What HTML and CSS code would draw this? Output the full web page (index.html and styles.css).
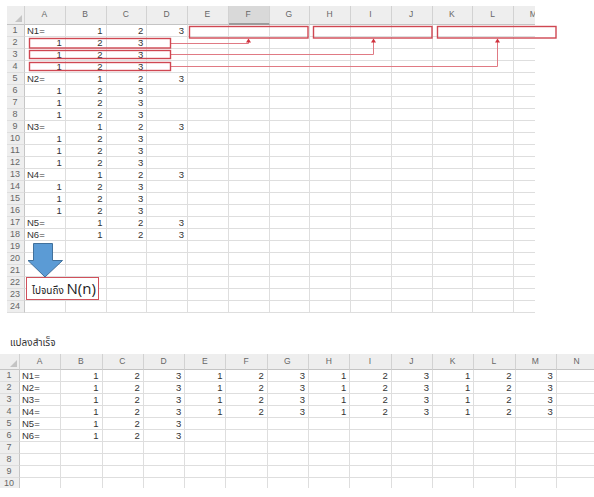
FILE: index.html
```html
<!DOCTYPE html>
<html lang="th">
<head>
<meta charset="utf-8">
<title>Sheet</title>
<link rel="stylesheet" href="styles.css">
</head>
<body>
<div class="s1">
  <div class="r hd"><span class="corner"></span><span>A</span><span>B</span><span>C</span><span>D</span><span>E</span><span class="sel">F</span><span>G</span><span>H</span><span>I</span><span>J</span><span>K</span><span>L</span><span>M</span></div>
  <div class="r"><span class="rh">1</span><span>N1=</span><span class="n">1</span><span class="n">2</span><span class="n">3</span><i></i><i></i><i></i><i></i><i></i><i></i><i></i><i></i><i></i></div>
  <div class="r"><span class="rh">2</span><span class="n">1</span><span class="n">2</span><span class="n">3</span><i></i><i></i><i></i><i></i><i></i><i></i><i></i><i></i><i></i><i></i></div>
  <div class="r"><span class="rh">3</span><span class="n">1</span><span class="n">2</span><span class="n">3</span><i></i><i></i><i></i><i></i><i></i><i></i><i></i><i></i><i></i><i></i></div>
  <div class="r"><span class="rh">4</span><span class="n">1</span><span class="n">2</span><span class="n">3</span><i></i><i></i><i></i><i></i><i></i><i></i><i></i><i></i><i></i><i></i></div>
  <div class="r"><span class="rh">5</span><span>N2=</span><span class="n">1</span><span class="n">2</span><span class="n">3</span><i></i><i></i><i></i><i></i><i></i><i></i><i></i><i></i><i></i></div>
  <div class="r"><span class="rh">6</span><span class="n">1</span><span class="n">2</span><span class="n">3</span><i></i><i></i><i></i><i></i><i></i><i></i><i></i><i></i><i></i><i></i></div>
  <div class="r"><span class="rh">7</span><span class="n">1</span><span class="n">2</span><span class="n">3</span><i></i><i></i><i></i><i></i><i></i><i></i><i></i><i></i><i></i><i></i></div>
  <div class="r"><span class="rh">8</span><span class="n">1</span><span class="n">2</span><span class="n">3</span><i></i><i></i><i></i><i></i><i></i><i></i><i></i><i></i><i></i><i></i></div>
  <div class="r"><span class="rh">9</span><span>N3=</span><span class="n">1</span><span class="n">2</span><span class="n">3</span><i></i><i></i><i></i><i></i><i></i><i></i><i></i><i></i><i></i></div>
  <div class="r"><span class="rh">10</span><span class="n">1</span><span class="n">2</span><span class="n">3</span><i></i><i></i><i></i><i></i><i></i><i></i><i></i><i></i><i></i><i></i></div>
  <div class="r"><span class="rh">11</span><span class="n">1</span><span class="n">2</span><span class="n">3</span><i></i><i></i><i></i><i></i><i></i><i></i><i></i><i></i><i></i><i></i></div>
  <div class="r"><span class="rh">12</span><span class="n">1</span><span class="n">2</span><span class="n">3</span><i></i><i></i><i></i><i></i><i></i><i></i><i></i><i></i><i></i><i></i></div>
  <div class="r"><span class="rh">13</span><span>N4=</span><span class="n">1</span><span class="n">2</span><span class="n">3</span><i></i><i></i><i></i><i></i><i></i><i></i><i></i><i></i><i></i></div>
  <div class="r"><span class="rh">14</span><span class="n">1</span><span class="n">2</span><span class="n">3</span><i></i><i></i><i></i><i></i><i></i><i></i><i></i><i></i><i></i><i></i></div>
  <div class="r"><span class="rh">15</span><span class="n">1</span><span class="n">2</span><span class="n">3</span><i></i><i></i><i></i><i></i><i></i><i></i><i></i><i></i><i></i><i></i></div>
  <div class="r"><span class="rh">16</span><span class="n">1</span><span class="n">2</span><span class="n">3</span><i></i><i></i><i></i><i></i><i></i><i></i><i></i><i></i><i></i><i></i></div>
  <div class="r"><span class="rh">17</span><span>N5=</span><span class="n">1</span><span class="n">2</span><span class="n">3</span><i></i><i></i><i></i><i></i><i></i><i></i><i></i><i></i><i></i></div>
  <div class="r"><span class="rh">18</span><span>N6=</span><span class="n">1</span><span class="n">2</span><span class="n">3</span><i></i><i></i><i></i><i></i><i></i><i></i><i></i><i></i><i></i></div>
  <div class="r"><span class="rh">19</span><i></i><i></i><i></i><i></i><i></i><i></i><i></i><i></i><i></i><i></i><i></i><i></i><i></i></div>
  <div class="r"><span class="rh">20</span><i></i><i></i><i></i><i></i><i></i><i></i><i></i><i></i><i></i><i></i><i></i><i></i><i></i></div>
  <div class="r"><span class="rh">21</span><i></i><i></i><i></i><i></i><i></i><i></i><i></i><i></i><i></i><i></i><i></i><i></i><i></i></div>
  <div class="r"><span class="rh">22</span><i></i><i></i><i></i><i></i><i></i><i></i><i></i><i></i><i></i><i></i><i></i><i></i><i></i></div>
  <div class="r"><span class="rh">23</span><i></i><i></i><i></i><i></i><i></i><i></i><i></i><i></i><i></i><i></i><i></i><i></i><i></i></div>
  <div class="r"><span class="rh">24</span><i></i><i></i><i></i><i></i><i></i><i></i><i></i><i></i><i></i><i></i><i></i><i></i><i></i></div>

  <svg class="ov" width="594" height="320" viewBox="0 0 594 320" aria-hidden="true">
    <g fill="none" stroke="#e07a84" stroke-width="1">
      <polyline points="170,43.5 248.5,43.5 248.5,41"/>
      <polyline points="170,54.5 373.5,54.5 373.5,41"/>
      <polyline points="170,66.5 497.5,66.5 497.5,41"/>
    </g>
    <g fill="#d0303c">
      <polygon points="248.5,38.5 246,42.5 251,42.5"/>
      <polygon points="373.5,38.5 371,42.5 376,42.5"/>
      <polygon points="497.5,38.5 495,42.5 500,42.5"/>
    </g>
    <g fill="none" stroke="#cf4752" stroke-width="1.4">
      <rect x="29.5" y="38.5" width="141" height="9.5"/>
      <rect x="29.5" y="50.5" width="141" height="8"/>
      <rect x="29.5" y="62.5" width="141" height="8"/>
      <rect x="189.5" y="26.5" width="118.5" height="11.5"/>
      <rect x="313.5" y="26.5" width="118.5" height="11.5"/>
      <rect x="437.5" y="26.5" width="118.5" height="11.5"/>
    </g>
    <polygon points="33.5,243.5 52.5,243.5 52.5,260.5 62.5,260.5 45,277 28,260.5 33.5,260.5" fill="#5b9bd5" stroke="#41719c" stroke-width="1"/>
  </svg>
  <div class="tb"><span class="th">ไปจนถึง</span> <span class="nn">N(n)</span></div>
</div>

<div class="cap">แปลงสำเร็จ</div>

<div class="s2">
  <div class="r hd"><span class="corner"></span><span>A</span><span>B</span><span>C</span><span>D</span><span>E</span><span>F</span><span>G</span><span>H</span><span>I</span><span>J</span><span>K</span><span>L</span><span>M</span><span>N</span></div>
  <div class="r"><span class="rh">1</span><span>N1=</span><span class="n">1</span><span class="n">2</span><span class="n">3</span><span class="n">1</span><span class="n">2</span><span class="n">3</span><span class="n">1</span><span class="n">2</span><span class="n">3</span><span class="n">1</span><span class="n">2</span><span class="n">3</span><i></i></div>
  <div class="r"><span class="rh">2</span><span>N2=</span><span class="n">1</span><span class="n">2</span><span class="n">3</span><span class="n">1</span><span class="n">2</span><span class="n">3</span><span class="n">1</span><span class="n">2</span><span class="n">3</span><span class="n">1</span><span class="n">2</span><span class="n">3</span><i></i></div>
  <div class="r"><span class="rh">3</span><span>N3=</span><span class="n">1</span><span class="n">2</span><span class="n">3</span><span class="n">1</span><span class="n">2</span><span class="n">3</span><span class="n">1</span><span class="n">2</span><span class="n">3</span><span class="n">1</span><span class="n">2</span><span class="n">3</span><i></i></div>
  <div class="r"><span class="rh">4</span><span>N4=</span><span class="n">1</span><span class="n">2</span><span class="n">3</span><span class="n">1</span><span class="n">2</span><span class="n">3</span><span class="n">1</span><span class="n">2</span><span class="n">3</span><span class="n">1</span><span class="n">2</span><span class="n">3</span><i></i></div>
  <div class="r"><span class="rh">5</span><span>N5=</span><span class="n">1</span><span class="n">2</span><span class="n">3</span><i></i><i></i><i></i><i></i><i></i><i></i><i></i><i></i><i></i><i></i></div>
  <div class="r"><span class="rh">6</span><span>N6=</span><span class="n">1</span><span class="n">2</span><span class="n">3</span><i></i><i></i><i></i><i></i><i></i><i></i><i></i><i></i><i></i><i></i></div>
  <div class="r"><span class="rh">7</span><i></i><i></i><i></i><i></i><i></i><i></i><i></i><i></i><i></i><i></i><i></i><i></i><i></i><i></i></div>
  <div class="r"><span class="rh">8</span><i></i><i></i><i></i><i></i><i></i><i></i><i></i><i></i><i></i><i></i><i></i><i></i><i></i><i></i></div>
  <div class="r"><span class="rh">9</span><i></i><i></i><i></i><i></i><i></i><i></i><i></i><i></i><i></i><i></i><i></i><i></i><i></i><i></i></div>
  <div class="r"><span class="rh">10</span><i></i><i></i><i></i><i></i><i></i><i></i><i></i><i></i><i></i><i></i><i></i><i></i><i></i><i></i></div>
</div>
</body>
</html>
```
FILE: styles.css
```css
* { box-sizing: border-box; }
html, body { margin: 0; padding: 0; }
body {
  background: #fff;
  font-family: "Liberation Sans", Arial, "Noto Sans Thai", sans-serif;
  font-size: 9.5px;
  color: #333;
  width: 594px;
  height: 497px;
  overflow: hidden;
}
.s1 {
  position: relative;
  margin: 6px 0 0 7px;
  width: 528px;
}
.r {
  display: grid;
  height: 12px;
}
.s1 .r {
  grid-template-columns: 18px repeat(13, 40.75px);
  width: 528px;
  overflow: hidden;
}
.s2 .r { grid-template-columns: 20px repeat(14, 41.3px); }
.r > * {
  border-right: 1px solid #dedede;
  border-bottom: 1px solid #dedede;
  line-height: 11px;
  padding: 0 3px 0 2px;
  white-space: nowrap;
  overflow: hidden;
  font-style: normal;
}
.n { text-align: right; }
.rh {
  background: #eeeeee;
  color: #666;
  text-align: center;
  border-right-color: #c6c6c6 !important;
  font-size: 9px;
}
.s1 .hd { height: 19px; }
.s2 .hd { height: 16px; }
.hd > * {
  background: #eeeeee;
  color: #666;
  text-align: center;
  line-height: 17px;
  font-size: 8.5px;
  border-right-color: #d2d2d2;
  border-bottom-color: #c4c4c4;
}
.s2 .hd > * { line-height: 15px; }
.hd > .sel {
  background: #d9d9d9;
  border-bottom: 2px solid #9c9c9c;
}
.corner { position: relative; }
.corner::after {
  content: "";
  position: absolute;
  right: 2px;
  bottom: 2px;
  width: 0;
  height: 0;
  border-left: 7px solid transparent;
  border-bottom: 7px solid #c4c4c4;
}
.ov {
  position: absolute;
  left: -7px;
  top: -6px;
  pointer-events: none;
}
.tb {
  position: absolute;
  left: 19px;
  top: 271px;
  width: 73px;
  height: 23px;
  background: #fff;
  border: 1.5px solid #d0505b;
  padding: 2px 0 0 5px;
  white-space: nowrap;
  color: #222;
}
.th {
  font-family: "Noto Sans Thai", "Noto Sans", "DejaVu Sans", sans-serif;
  font-size: 10px;
}
.nn {
  font-family: "Open Sans", "Liberation Sans", sans-serif;
  font-size: 15px;
  line-height: 17px;
}
.cap {
  margin: 23px 0 0 10px;
  font-family: "Noto Sans Thai", "Noto Sans", "DejaVu Sans", sans-serif;
  font-size: 10px;
  line-height: 14px;
  color: #333;
}
.s2 {
  margin-top: 4px;
  height: 134px;
  overflow: hidden;
  width: 594px;
}
```
